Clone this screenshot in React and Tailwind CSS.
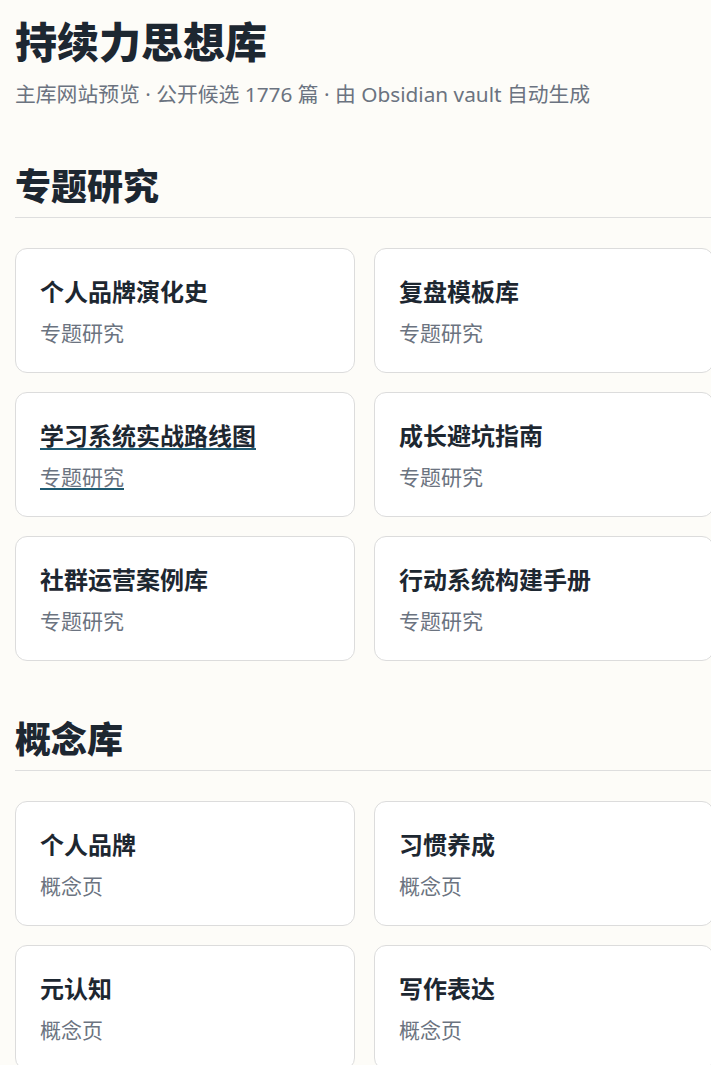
import React from "react";

const topics = [
  "个人品牌演化史",
  "复盘模板库",
  "学习系统实战路线图",
  "成长避坑指南",
  "社群运营案例库",
  "行动系统构建手册",
];

const concepts = ["个人品牌", "习惯养成", "元认知", "写作表达"];

function Card({ title, kind, hover }) {
  return (
    <a
      href="#"
      className={
        "block rounded-xl border border-[#dcdcdc] bg-white px-[24px] pt-[27px] pb-[24px] " +
        (hover
          ? "underline decoration-[#1f5a72] decoration-2 underline-offset-[3px]"
          : "no-underline")
      }
    >
      <div className="text-[24px] leading-[31px] font-bold text-[#1d2731]">{title}</div>
      <div className="mt-[11px] text-[21px] leading-[30px] text-[#6b7380]">{kind}</div>
    </a>
  );
}

function Section({ title, className, children }) {
  return (
    <section className={className}>
      <h2 className="border-b border-[#dedede] pb-2 text-[36px] leading-[45px] font-extrabold text-[#1d2731]">
        {title}
      </h2>
      <div className="mt-[30px] grid grid-cols-2 gap-[19px]">{children}</div>
    </section>
  );
}

export default function App() {
  return (
    <div
      className="min-h-screen w-full overflow-hidden bg-[#fdfcf8]"
      style={{ fontFamily: '"Noto Sans", "Noto Sans CJK SC", sans-serif' }}
    >
      <div className="w-[699px] ml-[15px] pt-[17px] pb-10">
        <h1 className="text-[42px] leading-[50px] font-extrabold text-[#1d2731]">持续力思想库</h1>
        <p className="mt-[12px] text-[20.8px] leading-[30px] text-[#6b7380]">
          主库网站预览 · 公开候选 1776 篇 · 由 Obsidian vault 自动生成
        </p>
        <Section title="专题研究" className="mt-[55px]">
          {topics.map((t, i) => (
            <Card key={t} title={t} kind="专题研究" hover={i === 2} />
          ))}
        </Section>
        <Section title="概念库" className="mt-[56px]">
          {concepts.map((t) => (
            <Card key={t} title={t} kind="概念页" />
          ))}
        </Section>
      </div>
    </div>
  );
}
